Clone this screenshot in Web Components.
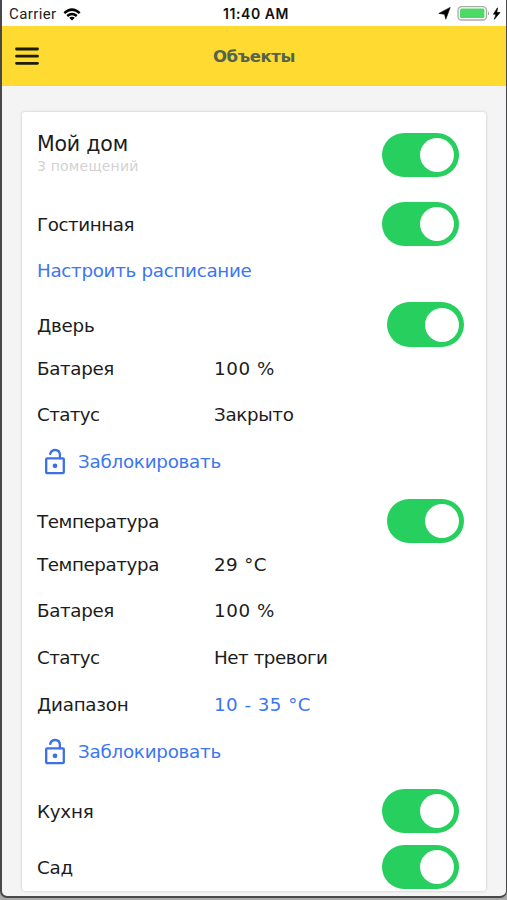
<!DOCTYPE html>
<html lang="ru"><head><meta charset="utf-8"><title>Объекты</title>
<style>html,body{margin:0;height:100%;overflow:hidden}body{background:#a9a9a9;font-family:"DejaVu Sans",Verdana,sans-serif}</style></head><body>
<smart-app></smart-app>
<script>
const define=(name,html,setup)=>customElements.define(name,class extends HTMLElement{
  connectedCallback(){
    if(this.shadowRoot)return;
    const t=document.createElement('template');t.innerHTML=html;
    this.attachShadow({mode:'open'}).append(t.content.cloneNode(true));
    if(setup)setup(this);
  }
});

// Text label; the w attribute is the wanted advance width, reached by tracking.
define('fit-text',`<style>:host{display:block;white-space:pre;line-height:1.2;flex:none}span{display:inline-block}</style><span><slot></slot></span>`,el=>{
  const s=el.shadowRoot.querySelector('span'),w=+el.getAttribute('w');
  if(w)s.style.letterSpacing=((w-s.getBoundingClientRect().width)/el.textContent.length).toFixed(3)+'px';
});

define('status-bar',`<style>
:host{display:grid;grid-template-columns:1fr auto 1fr;align-items:center;height:26px;padding:2px 5px 0 7px;box-sizing:border-box;background:#fff;font-family:Inter,"Liberation Sans",sans-serif;font-size:14px;color:#222}
div{display:flex;align-items:center}.r{justify-content:flex-end}
.t{font-weight:600;color:#111;padding-left:2px}svg{display:block}
.c{font-family:Roboto,sans-serif;font-size:15px}
</style>
<div style="gap:6px"><fit-text class="c" w="47.5">Carrier</fit-text>
<svg width="18" height="13" viewBox="0 0 18 13"><g fill="none" stroke="#000" stroke-width="2.5"><path d="M1.3 5.1Q9-1.8 16.7 5.1"/><path d="M4.2 8Q9 4 13.8 8"/></g><path d="M6.2 9.8Q9 7.8 11.8 9.8L9 12.6Z"/></svg></div>
<fit-text class="t" w="66">11:40 AM</fit-text>
<div class="r"><svg width="64" height="16" viewBox="0 0 64 16"><path d="M13.2 1.4L8.8 13.2L7.5 8.3L1.8 7.4Z" stroke="#000" stroke-width=".6"/>
<rect x="21" y=".7" width="28.5" height="13.3" rx="3.6" fill="#fff" stroke="#aaa" stroke-width="1.3"/><rect x="23" y="2.6" width="24.4" height="9.5" rx="1.6" fill="#4cd964"/><path d="M51 5.2Q53 7.3 51 9.4Z" fill="#999"/><path d="M60.5 1.8L56.4 8.2H59L57.4 13.3L63 6.5H59.8Z" stroke="#000" stroke-width=".7"/></svg></div>`);

define('nav-bar',`<style>
:host{display:grid;grid-template-columns:40px 1fr 40px;align-items:center;height:60px;padding:0 12px;background:#ffdb32;color:#54634d;font-size:16.5px;font-weight:bold}
fit-text{justify-self:center;padding-top:2px}
svg{display:block}</style>
<svg width="26" height="20" viewBox="0 0 26 20"><path d="M2.5 3H23.5M2.5 10.2H23.5M2.5 17.3H23.5" stroke="#1d1c0b" stroke-width="2.8" stroke-linecap="round"/></svg>
<fit-text><slot></slot></fit-text>`,el=>{
  const s=el.shadowRoot.querySelector('fit-text').shadowRoot.querySelector('span');
  s.style.letterSpacing=((82-s.getBoundingClientRect().width)/el.textContent.length).toFixed(3)+'px';
});

define('toggle-switch',`<style>
:host{display:flex;align-items:center;justify-content:flex-end;box-sizing:border-box;width:77.5px;height:44.5px;border-radius:23px;padding-right:5px;background:#26cf5e;flex:none}
i{display:block;width:34px;height:34px;border-radius:50%;background:#fff}</style><i></i>`);

define('object-row',`<style>
:host{display:flex;align-items:center;justify-content:space-between;height:44px;padding:0 27px 0 15px;box-sizing:border-box}
:host([device]){padding-right:22px}
.label{display:flex;flex-direction:column;padding-top:2px}</style>
<div class="label"><slot></slot></div><toggle-switch></toggle-switch>`);

define('detail-row',`<style>
:host{display:grid;grid-template-columns:177px 1fr;align-items:center;height:47px;padding:0 15px;box-sizing:border-box}
</style><slot></slot><slot name="value"></slot>`);

define('lock-action',`<style>
:host{display:flex;align-items:center;height:46px;padding-left:22px;gap:12px;color:#3c76f0;box-sizing:border-box}
svg{display:block}</style>
<svg width="22" height="28" viewBox="0 0 22 28"><g fill="none" stroke="#3d70e8" stroke-width="2.3"><rect x="2.2" y="10.3" width="17.6" height="14.9" rx="1"/><path d="M6.2 5.8C7 3.2 8.5 2 11 2C14.2 2 15.9 4.1 15.9 7V10.3" stroke-linecap="round"/></g><circle cx="11" cy="17.8" r="2.4" fill="#3d70e8"/></svg>
<fit-text w="143">Заблокировать</fit-text>`);

define('object-card',`<style>
:host{display:flex;flex-direction:column;margin:26px 20px 0;height:779px;background:#fff;border-radius:3px;box-shadow:0 0 3px rgba(0,0,0,.2);font-size:18.3px;color:#1c1c1c}
.home{height:86px}.name{font-size:20.5px;padding-bottom:2px;margin-top:-5px}.sub{font-size:14px;color:#d2d2d2}
.link{color:#3c76f0}.plan{height:42px;display:flex;align-items:center;padding-left:15px}
</style>
<object-row class="home"><fit-text class="name" w="91">Мой дом</fit-text><fit-text class="sub" w="101.5">3 помещений</fit-text></object-row>
<object-row style="height:52px"><fit-text w="97">Гостинная</fit-text></object-row>
<div class="plan link"><fit-text w="214.5">Настроить расписание</fit-text></div>
<object-row device style="margin-top:10px;height:45px"><fit-text w="57.5">Дверь</fit-text></object-row>
<detail-row style="height:44px"><fit-text w="77">Батарея</fit-text><fit-text slot="value" w="61">100 %</fit-text></detail-row>
<detail-row style="height:48px"><fit-text w="62.5">Статус</fit-text><fit-text slot="value" w="79.5">Закрыто</fit-text></detail-row>
<lock-action></lock-action>
<object-row device style="margin-top:14px"><fit-text w="122">Температура</fit-text></object-row>
<detail-row style="height:44px"><fit-text w="122">Температура</fit-text><fit-text slot="value" w="53">29 °C</fit-text></detail-row>
<detail-row style="height:48px"><fit-text w="77">Батарея</fit-text><fit-text slot="value" w="61">100 %</fit-text></detail-row>
<detail-row style="height:46px"><fit-text w="62.5">Статус</fit-text><fit-text slot="value" w="113.5">Нет тревоги</fit-text></detail-row>
<detail-row style="height:48px"><fit-text w="91.5">Диапазон</fit-text><fit-text class="link" slot="value" w="97">10 - 35 °C</fit-text></detail-row>
<lock-action></lock-action>
<object-row style="margin-top:14px"><fit-text w="56.5">Кухня</fit-text></object-row>
<object-row style="margin-top:12px"><fit-text w="36">Сад</fit-text></object-row>`);

define('smart-app',`<style>
:host{display:block;box-sizing:border-box;width:507px;height:898px;border:solid #48484a;border-width:0 1px 2px 2px;border-radius:0 0 7px 7px;background:#f4f4f4;overflow:hidden}</style>
<status-bar></status-bar><nav-bar>Объекты</nav-bar><object-card></object-card>`);
</script></body></html>
